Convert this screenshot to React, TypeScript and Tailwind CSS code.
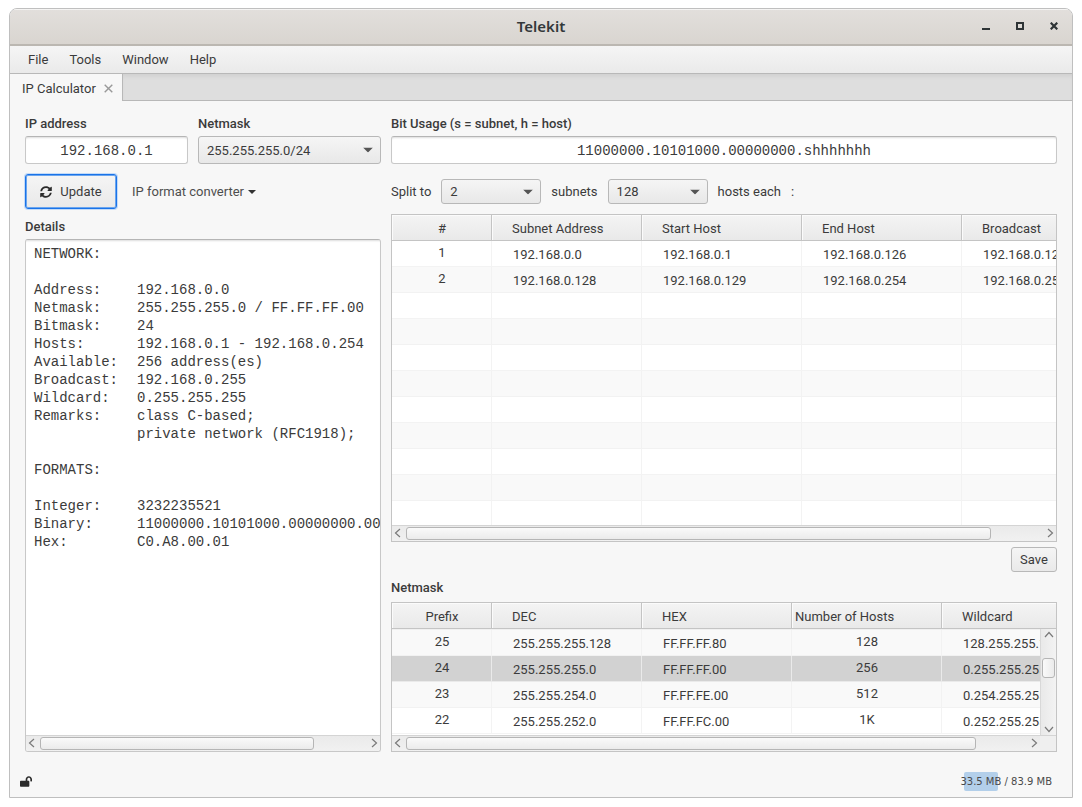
import React from "react";
import { FaLockOpen, FaSyncAlt } from "react-icons/fa";

const details = [
  "NETWORK:",
  "",
  "Address:\t192.168.0.0",
  "Netmask:\t255.255.255.0 / FF.FF.FF.00",
  "Bitmask:\t24",
  "Hosts:\t192.168.0.1 - 192.168.0.254",
  "Available:\t256 address(es)",
  "Broadcast:\t192.168.0.255",
  "Wildcard:\t0.255.255.255",
  "Remarks:\tclass C-based;",
  "\tprivate network (RFC1918);",
  "",
  "FORMATS:",
  "",
  "Integer:\t3232235521",
  "Binary:\t11000000.10101000.00000000.00000001",
  "Hex:\tC0.A8.00.01",
].join("\n");

type Column = { title: string; width: string; head: string; center?: boolean };

const subnetColumns: Column[] = [
  { title: "#", width: "w-[100px]", head: "pl-px text-center", center: true },
  { title: "Subnet Address", width: "w-[150px]", head: "pl-5 text-left" },
  { title: "Start Host", width: "w-[160px]", head: "pl-5 text-left" },
  { title: "End Host", width: "w-[160px]", head: "pl-5 text-left" },
  { title: "Broadcast", width: "w-[160px]", head: "pl-5 text-left" },
];

const subnetRows: string[][] = [
  ["1", "192.168.0.0", "192.168.0.1", "192.168.0.126", "192.168.0.127"],
  ["2", "192.168.0.128", "192.168.0.129", "192.168.0.254", "192.168.0.255"],
  ...Array.from({ length: 30 }, () => ["", "", "", "", ""]),
];

const maskColumns: Column[] = [
  { title: "Prefix", width: "w-[100px]", head: "pl-px text-center", center: true },
  { title: "DEC", width: "w-[150px]", head: "pl-5 text-left" },
  { title: "HEX", width: "w-[150px]", head: "pl-5 text-left" },
  { title: "Number of Hosts", width: "w-[150px]", head: "pl-[3px] text-left", center: true },
  { title: "Wildcard", width: "w-[150px]", head: "pl-5 text-left" },
];

const maskRows: string[][] = [
  ["25", "255.255.255.128", "FF.FF.FF.80", "128", "128.255.255.127"],
  ["24", "255.255.255.0", "FF.FF.FF.00", "256", "0.255.255.255"],
  ["23", "255.255.254.0", "FF.FF.FE.00", "512", "0.254.255.255"],
  ["22", "255.255.252.0", "FF.FF.FC.00", "1K", "0.252.255.255"],
];

function DataTable({
  label,
  columns,
  rows,
  selected,
  scrolled = false,
}: {
  label: string;
  columns: Column[];
  rows: string[][];
  selected?: number;
  scrolled?: boolean;
}) {
  return (
    <table aria-label={label} className="w-[750px] table-fixed border-separate border-spacing-0">
      <thead>
        <tr>
          {columns.map((c) => (
            <th
              key={c.title}
              className={`${c.width} ${c.head} h-[26px] border-r border-b border-[#c4c4c4] bg-linear-to-b from-[#f4f4f4] to-[#e9e9e9] pt-[3px] font-normal shadow-[inset_1px_1px_0_#fbfbfb]`}
            >
              {c.title}
            </th>
          ))}
          <th className="border-b border-[#c4c4c4] bg-[#efefef] p-0" />
        </tr>
      </thead>
      <tbody>
        {scrolled && (
          <tr aria-hidden="true" className="bg-[#f0f0f0]">
            <td colSpan={columns.length + 1} className="h-px p-0" />
          </tr>
        )}
        {rows.map((row, r) => {
          const shaded = (r % 2 === 1) !== scrolled;
          const tone = r === selected ? "bg-[#d2d2d2]" : shaded ? "bg-[#f9f9f9]" : "bg-white";
          return (
            <tr key={r} aria-selected={r === selected} className={tone}>
              {row.map((value, i) => (
                <td
                  key={i}
                  className={`h-[26px] border-r border-b border-[#f0f0f0]/80 p-0 ${
                    columns[i].center ? "pb-[2px] pl-px text-center" : "pt-[2px] pl-[21px]"
                  }`}
                >
                  {value}
                </td>
              ))}
              <td className="border-b border-[#f0f0f0]/80 p-0" />
            </tr>
          );
        })}
      </tbody>
    </table>
  );
}

function Chevron({ turn }: { turn: string }) {
  return (
    <svg viewBox="0 0 8 10" className={`h-[10px] w-2 shrink-0 ${turn}`} fill="none" stroke="#7a7a7a" strokeWidth="1.2">
      <path d="M6 1 1.5 5 6 9" />
    </svg>
  );
}

function HorizontalBar({ thumb, corner = false }: { thumb: string; corner?: boolean }) {
  return (
    <div className="flex h-4 shrink-0 border-t border-[#d4d4d4] bg-[#efefef]">
      <div className="flex min-w-0 flex-1 items-start bg-linear-to-b from-[#eaeaea] to-[#f1f1f1] pt-px">
        <button aria-label="Scroll left" className="flex h-3 w-[14px] shrink-0 items-center pl-[2px]">
          <Chevron turn="" />
        </button>
        <div className="min-w-0 flex-1">
          <div className={`${thumb} h-[13px] rounded-[3px] border border-[#b5b5b5] bg-linear-to-b from-[#fafafa] to-[#ebebeb]`} />
        </div>
        <button aria-label="Scroll right" className="flex h-3 w-[14px] shrink-0 items-center justify-end pr-[2px]">
          <Chevron turn="rotate-180" />
        </button>
      </div>
      {corner && <div className="w-4 bg-[#efefef]" />}
    </div>
  );
}

function VerticalBar() {
  return (
    <div className="absolute top-[26px] right-0 bottom-0 flex w-4 flex-col items-center border-l border-[#d8d8d8] bg-linear-to-r from-[#e9e9e9] to-[#f3f3f3]">
      <button aria-label="Scroll up" className="flex h-[12px] items-center">
        <Chevron turn="rotate-90" />
      </button>
      <div className="flex w-full flex-1 flex-col items-center">
        <div className="h-[17px]" />
        <div className="h-5 w-[13px] rounded-[3px] border border-[#b5b5b5] bg-linear-to-r from-[#fafafa] to-[#ebebeb]" />
      </div>
      <button aria-label="Scroll down" className="flex h-[12px] items-center">
        <Chevron turn="-rotate-90" />
      </button>
    </div>
  );
}

function Dropdown({ id, value, size }: { id: string; value: string; size: string }) {
  return (
    <div className={`relative ${size}`}>
      <select
        id={id}
        defaultValue={value}
        className="block size-full appearance-none rounded-[3px] border border-[#b8b8b8] bg-linear-to-b from-[#f5f5f5] to-[#e8e8e8] pt-px pr-6 pl-2 outline-none"
      >
        <option>{value}</option>
      </select>
      <svg viewBox="0 0 10 5" className="pointer-events-none absolute top-1/2 right-2 h-[5px] w-[10px] -translate-y-1/2">
        <path d="M0 0h10L5 5z" fill="#555" />
      </svg>
    </div>
  );
}

const fieldClass =
  "h-7 w-full rounded-[3px] border border-[#c8c8c8] border-t-[#b5b5b5] bg-white px-2 pt-[2px] text-center font-['Liberation_Mono',monospace] text-[14px] shadow-[inset_0_2px_2px_-1px_#ddd] outline-none";

export default function App() {
  return (
    <div className="flex h-screen min-h-[640px] flex-col bg-white px-[9px] pt-2 pb-[9px] font-[Roboto,sans-serif] text-[13px] leading-4 text-[#3b3b3b]">
      <div className="flex min-h-0 flex-1 flex-col overflow-hidden rounded-t-[8px] border border-[#bfbfbf] bg-[#f7f7f7]">
        <header className="grid h-[37px] shrink-0 grid-cols-[1fr_auto_1fr] items-center border-b-2 border-[#bbb7b1] bg-linear-to-b from-[#e2dfdc] to-[#d9d5d0] pb-px shadow-[inset_0_1px_0_#f5f4f3]">
          <span />
          <h1 className="font-['Noto_Sans',sans-serif] text-[15px] font-semibold text-[#33383a]">Telekit</h1>
          <div className="flex justify-end gap-[10px] pr-[6px]">
            <button aria-label="Minimize" className="flex size-6 items-center justify-center">
              <svg viewBox="0 0 8 8" className="size-2">
                <path d="M0 6h8v2H0z" fill="#2e3436" />
              </svg>
            </button>
            <button aria-label="Maximize" className="flex size-6 items-center justify-center">
              <svg viewBox="0 0 8 8" className="size-2">
                <path d="M1 1h6v6H1z" fill="none" stroke="#2e3436" strokeWidth="2" />
              </svg>
            </button>
            <button aria-label="Close" className="flex size-6 items-center justify-center">
              <svg viewBox="0 0 8 8" className="size-2">
                <path d="m.7.7 6.6 6.6m0-6.6L.7 7.3" stroke="#2e3436" strokeWidth="2.2" />
              </svg>
            </button>
          </div>
        </header>

        <nav className="flex h-7 shrink-0 items-center gap-[21px] border-b border-[#b8b8b8] bg-linear-to-b from-[#f5f5f5] to-[#eaeaea] pl-[18px]">
          <button>File</button>
          <button>Tools</button>
          <button>Window</button>
          <button>Help</button>
        </nav>

        <div role="tablist" className="flex h-[27px] shrink-0">
          <div className="flex items-center gap-2 border-r border-[#b8b8b8] pt-[2px] pr-[9px] pl-3">
            <button role="tab" aria-selected="true">
              IP Calculator
            </button>
            <button aria-label="Close tab">
              <svg viewBox="0 0 9 9" className="size-[9px]">
                <path d="m.7.7 7.6 7.6m0-7.6L.7 8.3" stroke="#999" strokeWidth="1.4" />
              </svg>
            </button>
          </div>
          <div className="flex-1 border-b border-[#b8b8b8] bg-[#dedede] shadow-[inset_0_4px_4px_-2px_#cfcfcf]" />
        </div>

        <main className="flex min-h-0 flex-1 gap-[10px] px-[15px] pt-[15px] pb-[14px]">
          <section className="flex w-[356px] shrink-0 flex-col gap-[10px]">
            <div className="flex gap-[10px]">
              <div className="flex w-[163px] flex-col gap-1">
                <label htmlFor="ip" className="font-medium">
                  IP address
                </label>
                <input id="ip" defaultValue="192.168.0.1" className={fieldClass} />
              </div>
              <div className="flex flex-1 flex-col gap-1">
                <label htmlFor="netmask" className="font-medium">
                  Netmask
                </label>
                <Dropdown id="netmask" value="255.255.255.0/24" size="h-7 w-full" />
              </div>
            </div>

            <div className="flex h-[35px] items-center gap-[15px]">
              <button className="flex h-[35px] w-[92px] items-center justify-center gap-2 rounded-[3px] border border-[#1a73e8] bg-linear-to-b from-[#f5f5f5] to-[#e9e9e9] shadow-[inset_0_0_0_1px_#6aa5ee,0_0_0_1px_#c3dbf8]">
                <FaSyncAlt className="size-3 text-[#2b2b2b]" />
                Update
              </button>
              <button className="flex items-center gap-1 text-[#4e4e4e]">
                IP format converter
                <svg viewBox="0 0 8 4" className="h-1 w-2">
                  <path d="M0 0h8L4 4z" fill="#333" />
                </svg>
              </button>
            </div>

            <div className="flex min-h-0 flex-1 flex-col gap-1">
              <label htmlFor="details" className="font-medium">
                Details
              </label>
              <div className="flex min-h-0 flex-1 flex-col overflow-hidden rounded-[3px] border border-[#c8c8c8] border-t-[#b5b5b5] bg-white">
                <textarea
                  id="details"
                  readOnly
                  wrap="off"
                  value={details}
                  className="min-h-0 flex-1 resize-none overflow-hidden pt-[5px] pl-2 font-['Liberation_Mono',monospace] text-[14px] leading-[18px] whitespace-pre shadow-[inset_0_2px_2px_-1px_#ddd] outline-none [tab-size:103px]"
                />
                <HorizontalBar thumb="w-[84%]" />
              </div>
            </div>
          </section>

          <section className="flex min-w-0 flex-1 flex-col">
            <div className="flex flex-col gap-1">
              <label htmlFor="bits" className="font-medium">
                Bit Usage (s = subnet, h = host)
              </label>
              <input id="bits" readOnly value="11000000.10101000.00000000.shhhhhhh" className={fieldClass} />
            </div>

            <div className="mt-[10px] flex h-[35px] items-center gap-[10px]">
              <label htmlFor="subnets">Split to</label>
              <Dropdown id="subnets" value="2" size="h-[25px] w-[100px]" />
              <label htmlFor="hosts">subnets</label>
              <Dropdown id="hosts" value="128" size="h-[25px] w-[100px]" />
              <span>hosts each</span>
              <span>:</span>
            </div>

            <div className="mt-[5px] flex min-h-0 flex-1 flex-col border border-[#c4c4c4] bg-white">
              <div className="min-h-0 flex-1 overflow-hidden">
                <DataTable label="Subnets" columns={subnetColumns} rows={subnetRows} />
              </div>
              <HorizontalBar thumb="w-[92%]" />
            </div>

            <button className="mt-[5px] h-[25px] w-[46px] self-end rounded-[3px] border border-[#b8b8b8] bg-linear-to-b from-[#f5f5f5] to-[#e9e9e9]">
              Save
            </button>

            <h2 className="mt-2 font-medium">Netmask</h2>
            <div className="mt-[6px] flex h-[150px] shrink-0 flex-col border border-[#c4c4c4] bg-white">
              <div className="relative min-h-0 flex-1 overflow-hidden">
                <DataTable label="Netmasks" columns={maskColumns} rows={maskRows} selected={1} scrolled />
                <VerticalBar />
              </div>
              <HorizontalBar thumb="w-[92%]" corner />
            </div>
          </section>
        </main>

        <footer className="flex h-[31px] shrink-0 items-center justify-between pr-5 pl-[10px]">
          <button aria-label="Unlocked">
            <FaLockOpen className="h-[11px] w-3 text-[#2b2b2b]" />
          </button>
          <div className="relative py-[2px] font-['DejaVu_Sans',sans-serif] text-[10px] leading-[15px] text-[#4a4a4a]">
            <span className="absolute inset-y-0 left-1 w-[34px] rounded-[2px] bg-[#b3cfea]" />
            <span className="relative">33.5 MB / 83.9 MB</span>
          </div>
        </footer>
      </div>
    </div>
  );
}
